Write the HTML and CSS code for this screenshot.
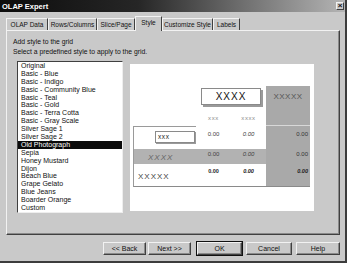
FILE: index.html
```html
<!DOCTYPE html>
<html lang="en">

<head>
    <meta charset="UTF-8">
    <title>OLAP Expert</title>
    <link rel="stylesheet" href="styles.css">
</head>

<body>
    <div class="window">
        <div class="titlebar">
            <span class="title">OLAP Expert</span>
            <span class="close">×</span>
        </div>

        <div class="tabs">
            <div class="tab tab-data">OLAP Data</div>
            <div class="tab tab-rows">Rows/Columns</div>
            <div class="tab tab-slice">Slice/Page</div>
            <div class="tab tab-style active">Style</div>
            <div class="tab tab-custom">Customize Style</div>
            <div class="tab tab-labels">Labels</div>
        </div>

        <div class="panel">
            <p class="intro">Add style to the grid<br>Select a predefined style to apply to the grid.</p>

            <div class="content">
                <ul class="list">
                    <li>Original</li>
                    <li>Basic - Blue</li>
                    <li>Basic - Indigo</li>
                    <li>Basic - Community Blue</li>
                    <li>Basic - Teal</li>
                    <li>Basic - Gold</li>
                    <li>Basic - Terra Cotta</li>
                    <li>Basic - Gray Scale</li>
                    <li>Silver Sage 1</li>
                    <li>Silver Sage 2</li>
                    <li class="selected">Old Photograph</li>
                    <li>Sepia</li>
                    <li>Honey Mustard</li>
                    <li>Dijon</li>
                    <li>Beach Blue</li>
                    <li>Grape Gelato</li>
                    <li>Blue Jeans</li>
                    <li>Boarder Orange</li>
                    <li>Custom</li>
                </ul>

                <div class="preview">
                    <div class="grid">
                        <div class="colhead"><span class="hbox">XXXX</span></div>
                        <div class="total-head">XXXXX</div>
                        <div class="sub sub-a">xxx</div>
                        <div class="sub sub-b">xxxx</div>

                        <div class="rowhead row1"><span class="rbox">xxx</span></div>
                        <div class="val c1 row1">0.00</div>
                        <div class="val c2 row1 italic">0.00</div>
                        <div class="tot row1">0.00</div>

                        <div class="rowhead row2 italic">XXXX</div>
                        <div class="val c1 row2">0.00</div>
                        <div class="val c2 row2 italic">0.00</div>
                        <div class="tot row2">0.00</div>

                        <div class="rowhead row3">XXXXX</div>
                        <div class="val c1 row3 bold">0.00</div>
                        <div class="val c2 row3 bold italic">0.00</div>
                        <div class="tot row3 bold italic">0.00</div>
                    </div>
                </div>
            </div>
        </div>

        <div class="buttons">
            <button class="btn btn-back">&lt;&lt; Back</button>
            <button class="btn btn-next">Next &gt;&gt;</button>
            <button class="btn btn-ok">OK</button>
            <button class="btn btn-cancel">Cancel</button>
            <button class="btn btn-help">Help</button>
        </div>
    </div>
</body>

</html>
```

FILE: styles.css
```css
body {
    margin: 0;
    font-family: "Liberation Sans", Arial, sans-serif;
    font-size: 7px;
    color: #111;
}

.window {
    width: 347px;
    height: 263px;
    box-sizing: border-box;
    background: #c9c9c9;
    border-right: 2px solid #3c3c3c;
    border-bottom: 2px solid #3c3c3c;
    overflow: hidden;
}

.titlebar {
    height: 12px;
    display: flex;
    align-items: center;
    justify-content: space-between;
    background: linear-gradient(to right, #0c0c0c 0%, #262626 40%, #6e6e6e 70%, #b4b4b4 100%);
}

.title {
    color: #fff;
    font-weight: bold;
    font-size: 7.5px;
    padding-left: 2px;
}

.close {
    width: 8px;
    height: 8px;
    margin-right: 1px;
    box-sizing: border-box;
    background: #c9c9c9;
    border: 1px solid;
    border-color: #f2f2f2 #404040 #404040 #f2f2f2;
    font-size: 8px;
    font-weight: bold;
    line-height: 6px;
    text-align: center;
}

/* tabs */
.tabs {
    display: flex;
    align-items: flex-end;
    height: 13px;
    margin-top: 5px;
    padding-left: 6px;
}

.tab {
    height: 12px;
    box-sizing: border-box;
    border-top: 1px solid #f2f2f2;
    border-left: 1px solid #f2f2f2;
    border-right: 1px solid #404040;
    font-size: 6.5px;
    line-height: 11px;
    text-align: center;
    white-space: nowrap;
}

.tab.active {
    height: 15px;
    margin-bottom: -1px;
    background: #c9c9c9;
    position: relative;
    z-index: 1;
    line-height: 11px;
}

.tab-data { width: 42px; }
.tab-rows { width: 49px; }
.tab-slice { width: 38px; }
.tab-style { width: 27px; }
.tab-custom { width: 51px; }
.tab-labels { width: 27px; }

.panel {
    width: 334px;
    height: 205px;
    margin-left: 6px;
    box-sizing: border-box;
    padding: 6px 0 0 6px;
    border-top: 1px solid #f2f2f2;
    border-left: 1px solid #f2f2f2;
    border-right: 1px solid #404040;
    border-bottom: 1px solid #404040;
    box-shadow: inset -1px -1px 0 #8a8a8a;
}

.intro {
    margin: 0;
    font-size: 6.8px;
    line-height: 9.5px;
}

.content {
    display: flex;
    align-items: flex-start;
    margin-top: 5px;
}

/* style list */
.list {
    list-style: none;
    margin: 0 0 0 4px;
    padding: 0;
    width: 106px;
    height: 152px;
    box-sizing: border-box;
    background: #fff;
    border-top: 1px solid #404040;
    border-left: 1px solid #404040;
    border-right: 1px solid #eee;
    border-bottom: 1px solid #eee;
}

.list li {
    height: 7.9px;
    line-height: 7.9px;
    padding-left: 3px;
    white-space: nowrap;
}

.list li.selected {
    background: #0a0a0a;
    color: #fff;
}

/* preview */
.preview {
    width: 184px;
    height: 147px;
    margin: 3px 0 0 7px;
    box-sizing: border-box;
    padding: 22px 0 0 3px;
    background: #fff;
}

.grid {
    display: grid;
    grid-template-columns: 63px 35px 35px 44px;
    grid-template-rows: 24px 16px 23px 15px 23px;
    color: #555;
}

.colhead {
    grid-column: 2 / 4;
    grid-row: 1;
}

.hbox {
    display: block;
    width: 60px;
    height: 17px;
    margin: 2px 0 0 5px;
    box-sizing: border-box;
    border: 1px solid #8a8a8a;
    box-shadow: 2px 2px 0 #9a9a9a;
    color: #111;
    font-size: 10px;
    letter-spacing: 1px;
    line-height: 15px;
    text-align: center;
}

.total-head {
    grid-column: 4;
    grid-row: 1 / 3;
    background: #a9a9a9;
    border-bottom: 1px solid #d8d8d8;
    font-size: 8px;
    letter-spacing: 0.5px;
    padding-top: 6px;
    text-align: center;
    color: #555;
}

.sub {
    grid-row: 2;
    font-size: 6px;
    letter-spacing: 0.6px;
    line-height: 16px;
    text-align: center;
    color: #8a8a8a;
}

.sub-a { grid-column: 2; }
.sub-b { grid-column: 3; }

.row1 { grid-row: 3; }
.row2 { grid-row: 4; }
.row3 { grid-row: 5; }

.rowhead { grid-column: 1; }
.c1 { grid-column: 2; }
.c2 { grid-column: 3; }
.tot { grid-column: 4; }

.rowhead {
    border-left: 1px solid #9a9a9a;
}

.rowhead.row1 {
    border-top: 1px solid #9a9a9a;
}

.rbox {
    display: block;
    width: 40px;
    height: 12px;
    margin: 4px 0 0 21px;
    box-sizing: border-box;
    border: 1px solid #8a8a8a;
    box-shadow: 1px 1px 0 #9a9a9a;
    color: #222;
    font-size: 6.5px;
    letter-spacing: 0.6px;
    line-height: 10px;
    padding-left: 2px;
}

.val {
    font-size: 6px;
    text-align: center;
    padding-top: 5px;
    color: #444;
}

.tot {
    background: #a9a9a9;
    font-size: 6px;
    text-align: right;
    padding: 5px 2px 0 0;
    color: #333;
}

.val.row2,
.tot.row2 {
    padding-top: 2px;
}

.val.row2,
.rowhead.row2 {
    background: #b2b2b2;
}

.rowhead.row2 {
    font-size: 8px;
    letter-spacing: 1px;
    padding: 4px 0 0 14px;
    color: #666;
}

.row3 {
    border-bottom: 1px solid #8a8a8a;
}

.rowhead.row3 {
    font-size: 8px;
    letter-spacing: 1px;
    padding: 8px 0 0 4px;
    color: #444;
}

.val.row3,
.tot.row3 {
    padding-top: 4px;
}

.italic {
    font-style: italic;
}

.bold {
    font-weight: bold;
    font-size: 5.5px;
    color: #222;
}

/* buttons */
.buttons {
    display: flex;
    justify-content: flex-end;
    margin-top: 7px;
    padding-right: 5px;
}

.btn {
    height: 13px;
    margin: 0 0 0 4px;
    padding: 0;
    box-sizing: border-box;
    background: #c9c9c9;
    border: 1px solid;
    border-color: #f2f2f2 #404040 #404040 #f2f2f2;
    box-shadow: inset -1px -1px 0 #8a8a8a;
    font-family: "Liberation Sans", Arial, sans-serif;
    font-size: 7px;
    color: #111;
}

.btn-back { width: 43px; }
.btn-next { width: 43px; margin-left: 2px; }
.btn-ok { width: 45px; margin-left: 6px; outline: 1px solid #111; }
.btn-cancel { width: 46px; }
.btn-help { width: 44px; }
```
